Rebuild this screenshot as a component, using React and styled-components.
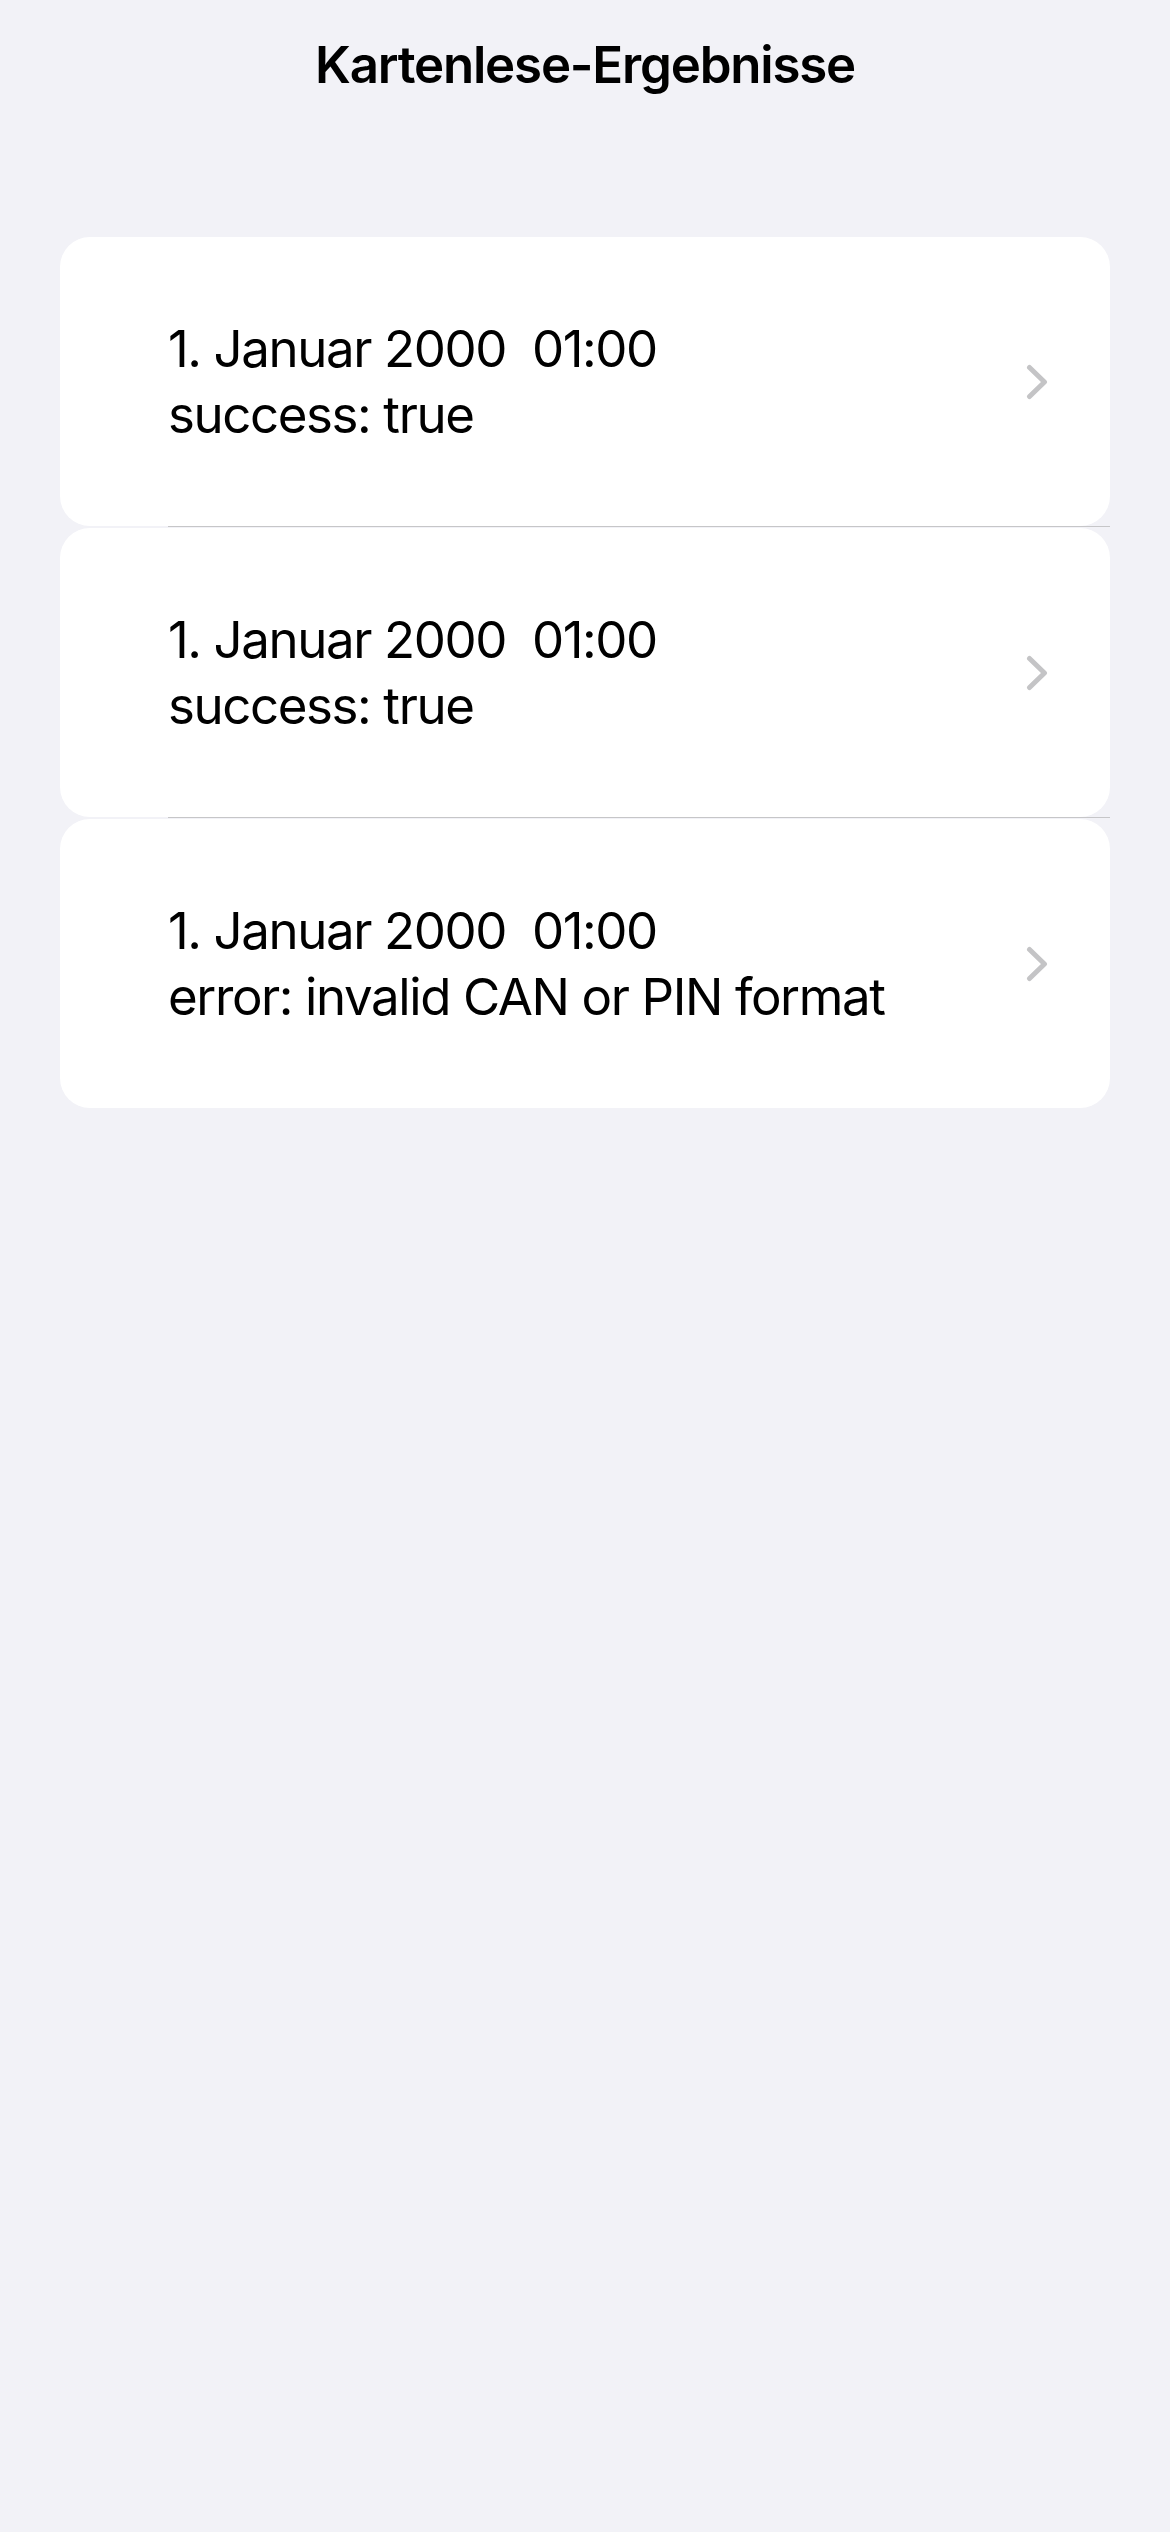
import styled, { createGlobalStyle } from 'styled-components';

const GlobalStyle = createGlobalStyle`
  html, body {
    margin: 0;
    padding: 0;
    background: #f2f2f7;
  }
  body {
    font-family: Inter, "Noto Sans", "Liberation Sans", sans-serif;
    color: #000;
    -webkit-font-smoothing: antialiased;
  }
`;

const Screen = styled.div`
  min-height: 2532px;
  background: #f2f2f7;
`;

const NavBar = styled.header`
  padding-top: 32px;
  height: 237px;
  box-sizing: border-box;
  text-align: center;
`;

const Title = styled.h1`
  margin: 0;
  font-size: 51px;
  line-height: 66px;
  font-weight: 600;
  letter-spacing: -1.2px;
`;

const List = styled.div`
  display: flex;
  flex-direction: column;
  padding: 0 60px;
`;

const Card = styled.div`
  background: #fff;
  border-radius: 30px;
  height: 289px;
  display: flex;
  align-items: center;
  justify-content: space-between;
  padding: 0 62px 0 108px;
  box-sizing: border-box;
`;

const Separator = styled.div`
  height: 1px;
  margin: 0 0 1px 108px;
  background: #c6c6c8;
`;

const TextBlock = styled.div`
  display: flex;
  flex-direction: column;
`;

const Line = styled.span`
  font-size: 51px;
  line-height: 66px;
  font-weight: 400;
  letter-spacing: -1.4px;
  white-space: pre;
`;

const Chevron = styled.svg`
  flex-shrink: 0;
  width: 22px;
  height: 36px;
`;

const results = [
  { date: '1. Januar 2000  01:00', status: 'success: true' },
  { date: '1. Januar 2000  01:00', status: 'success: true' },
  { date: '1. Januar 2000  01:00', status: 'error: invalid CAN or PIN format' },
];

export default function App() {
  return (
    <Screen>
      <GlobalStyle />
      <NavBar>
        <Title>Kartenlese-Ergebnisse</Title>
      </NavBar>
      <List>
        {results.map((r, i) => (
          <div key={i}>
            <Card>
              <TextBlock>
                <Line>{r.date}</Line>
                <Line>{r.status}</Line>
              </TextBlock>
              <Chevron viewBox="0 0 22 36">
                <polyline
                  points="3.5,3.5 18.5,18 3.5,32.5"
                  fill="none"
                  stroke="#c4c4c6"
                  strokeWidth="5"
                  strokeLinecap="round"
                  strokeLinejoin="round"
                />
              </Chevron>
            </Card>
            {i < results.length - 1 && <Separator />}
          </div>
        ))}
      </List>
    </Screen>
  );
}
